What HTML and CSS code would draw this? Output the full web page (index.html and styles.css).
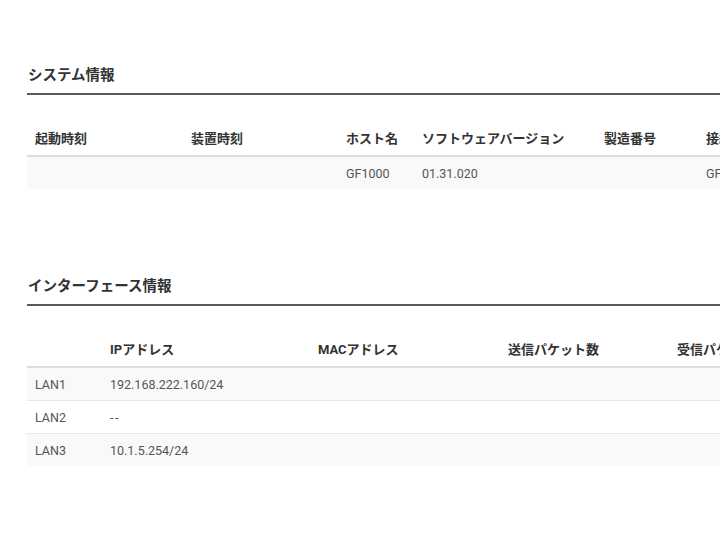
FILE: index.html
```html
<!DOCTYPE html>
<html lang="ja">
<head>
<meta charset="utf-8">
<title>情報</title>
<link rel="stylesheet" href="styles.css">
</head>
<body>
<main class="page">
  <section class="section section-system">
    <h2 class="section-title">システム情報</h2>
    <table class="info-table sys-table">
      <thead>
        <tr>
          <th class="c-boot">起動時刻</th>
          <th class="c-dev">装置時刻</th>
          <th class="c-host">ホスト名</th>
          <th class="c-ver">ソフトウェアバージョン</th>
          <th class="c-serial">製造番号</th>
          <th class="c-conn">接続機種</th>
        </tr>
      </thead>
      <tbody>
        <tr>
          <td></td>
          <td></td>
          <td>GF1000</td>
          <td>01.31.020</td>
          <td></td>
          <td>GF1000</td>
        </tr>
      </tbody>
    </table>
  </section>

  <section class="section section-if">
    <h2 class="section-title">インターフェース情報</h2>
    <table class="info-table if-table">
      <thead>
        <tr>
          <th class="c-name"></th>
          <th class="c-ip">IPアドレス</th>
          <th class="c-mac">MACアドレス</th>
          <th class="c-tx">送信パケット数</th>
          <th class="c-rx">受信パケット数</th>
        </tr>
      </thead>
      <tbody>
        <tr><td>LAN1</td><td>192.168.222.160/24</td><td></td><td></td><td></td></tr>
        <tr><td>LAN2</td><td><span class="dash">--</span></td><td></td><td></td><td></td></tr>
        <tr><td>LAN3</td><td>10.1.5.254/24</td><td></td><td></td><td></td></tr>
      </tbody>
    </table>
  </section>
</main>
</body>
</html>
```

FILE: styles.css
```css
html, body {
  margin: 0;
  padding: 0;
  background: #ffffff;
  overflow: hidden;
}

body {
  font-family: Roboto, "Noto Sans CJK JP", sans-serif;
  color: #555555;
}

.page {
  width: 900px;
  padding: 66px 0 0 27px;
}

.section-if {
  margin-top: 88px;
}

.section-title {
  margin: 0;
  font-size: 14.5px;
  line-height: 20px;
  font-weight: 700;
  color: #333333;
  padding: 0 0 7px 1px;
  border-bottom: 2px solid #5a5a5a;
}

.info-table {
  margin-top: 25px;
  border-collapse: collapse;
  table-layout: fixed;
  width: 900px;
}

.info-table th {
  height: 36px;
  padding: 0 8px;
  box-sizing: border-box;
  text-align: left;
  font-size: 13px;
  font-weight: 700;
  color: #333333;
  border-bottom: 2px solid #dddddd;
  white-space: nowrap;
  overflow: hidden;
}

.info-table td {
  height: 33px;
  padding: 0 8px;
  box-sizing: border-box;
  font-size: 12.5px;
  color: #555555;
  border-top: 1px solid #e6e6e6;
  white-space: nowrap;
}

.if-table td {
  padding-top: 2px;
}

.info-table tbody tr:first-child td {
  border-top: none;
}

.info-table tbody tr:nth-child(odd) {
  background: #f9f9f9;
}

.dash {
  letter-spacing: 1.5px;
}

.sys-table .c-boot { width: 156px; }
.sys-table .c-dev { width: 155px; }
.sys-table .c-host { width: 76px; }
.sys-table .c-ver { width: 182px; }
.sys-table .c-serial { width: 102px; }
.sys-table .c-conn { width: 229px; }

.if-table .c-name { width: 75px; }
.if-table .c-ip { width: 208px; }
.if-table .c-mac { width: 190px; }
.if-table .c-tx { width: 169px; }
.if-table .c-rx { width: 258px; }
```
